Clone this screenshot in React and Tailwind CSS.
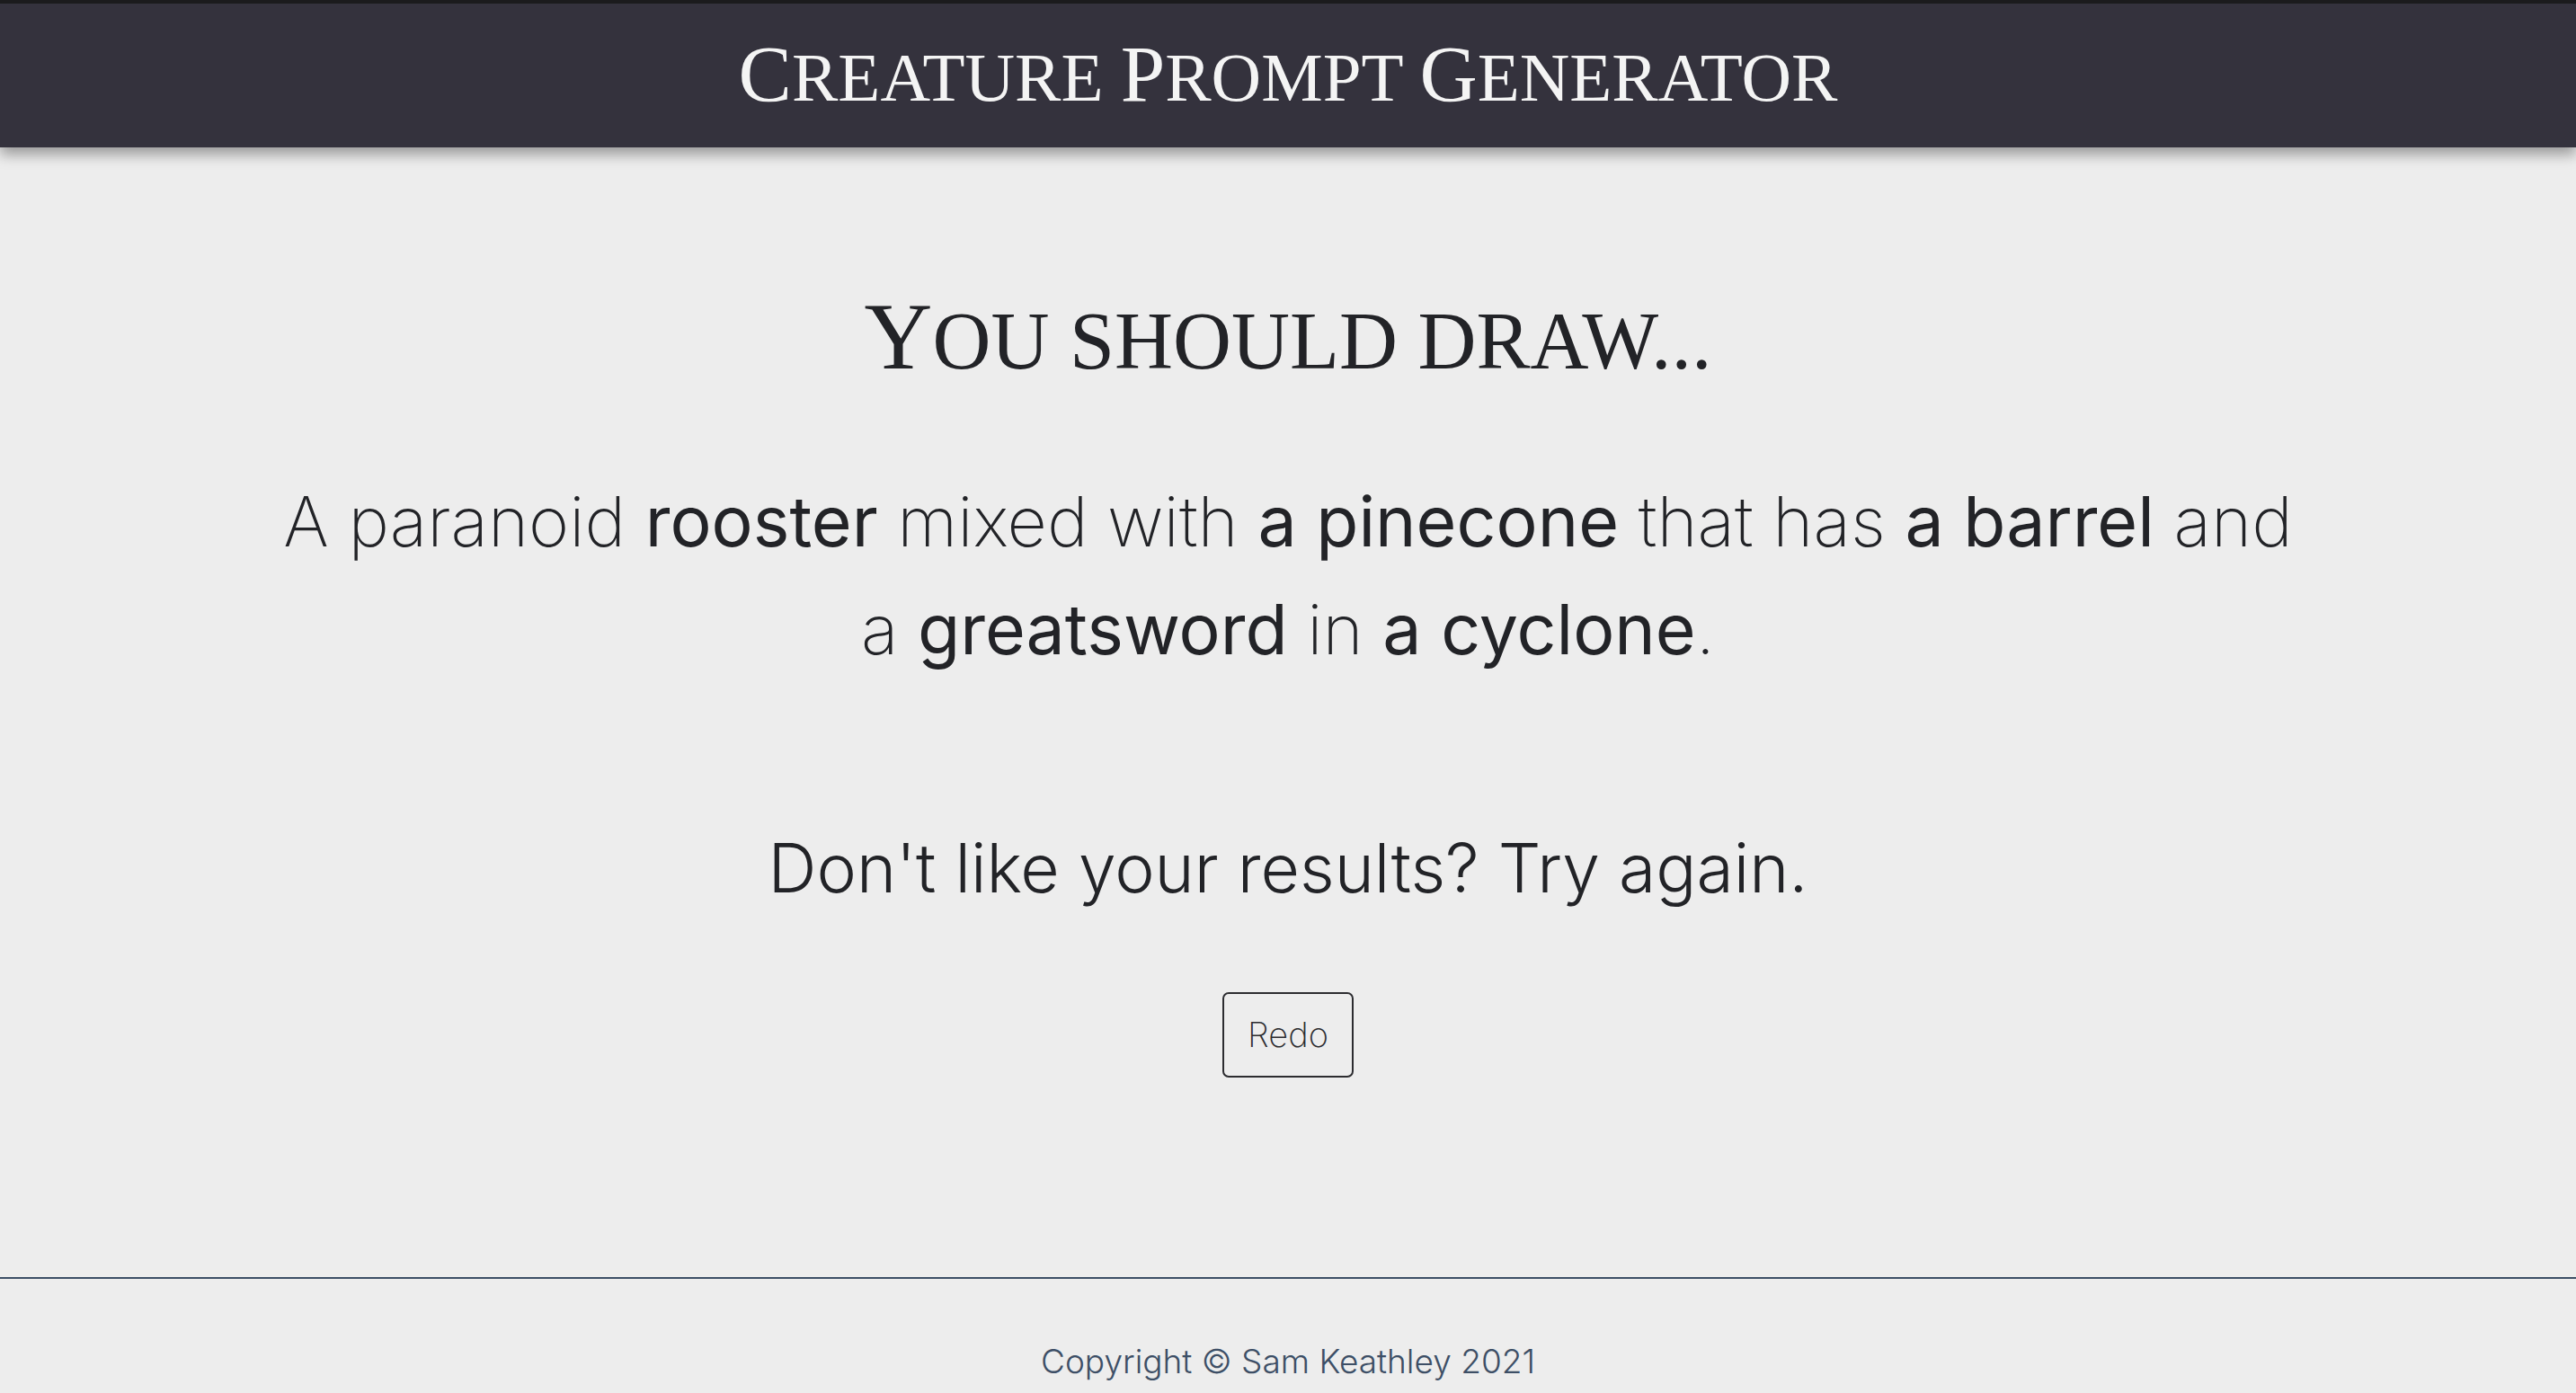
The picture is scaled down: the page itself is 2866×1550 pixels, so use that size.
import React from 'react';

function Strong({ children }) {
  return <span className="font-normal">{children}</span>;
}

// Small-caps word: first letter full size, the rest uppercase and smaller.
function Cap({ first, rest, big }) {
  return (
    <>
      <span className={big}>{first}</span>
      {rest}
    </>
  );
}

export default function App() {
  return (
    <div className="min-h-screen flex flex-col bg-[#ededed] text-[#222327]">
      <header className="h-[164px] border-t-4 border-[#1b1b1d] bg-[#34323d] flex items-center justify-center shadow-[0_8px_14px_rgba(0,0,0,0.35)] relative z-10">
        <h1 className="font-['Liberation_Serif',serif] text-[77px] leading-none text-[#f4f4f4] uppercase -mt-[4px]">
          <Cap first="C" rest="reature" big="text-[89px] leading-none" />{' '}
          <Cap first="P" rest="rompt" big="text-[89px] leading-none" />{' '}
          <Cap first="G" rest="enerator" big="text-[89px] leading-none" />
        </h1>
      </header>

      <main className="h-[1257px] flex flex-col items-center pt-[156px]">
        <h2 className="font-['Liberation_Serif',serif] text-[90px] leading-[120px] uppercase">
          <span className="text-[105px] leading-none">Y</span>ou should draw...
        </h2>

        <p className="mt-[80px] text-center font-['Inter',sans-serif] font-extralight text-[77px] leading-[120px]">
          A paranoid <Strong>rooster</Strong> mixed with <Strong>a pinecone</Strong> that has <Strong>a barrel</Strong> and
          <br />
          a <Strong>greatsword</Strong> in <Strong>a cyclone</Strong>.
        </p>

        <p className="mt-[156px] font-['Inter',sans-serif] font-light text-[75px] leading-[100px]">
          Don't like your results? Try again.
        </p>

        <button className="mt-[88px] h-[95px] px-[26px] border-2 border-[#2c2c30] rounded-[7px] font-['Inter',sans-serif] font-extralight text-[38px] text-[#2c2c30]">
          Redo
        </button>
      </main>

      <footer className="border-t-2 border-[#3d4f66] h-[200px] flex justify-center pt-[73px]">
        <p className="font-['Inter',sans-serif] font-light text-[37px] leading-none text-[#3d4f66]">
          Copyright © Sam Keathley 2021
        </p>
      </footer>
    </div>
  );
}
